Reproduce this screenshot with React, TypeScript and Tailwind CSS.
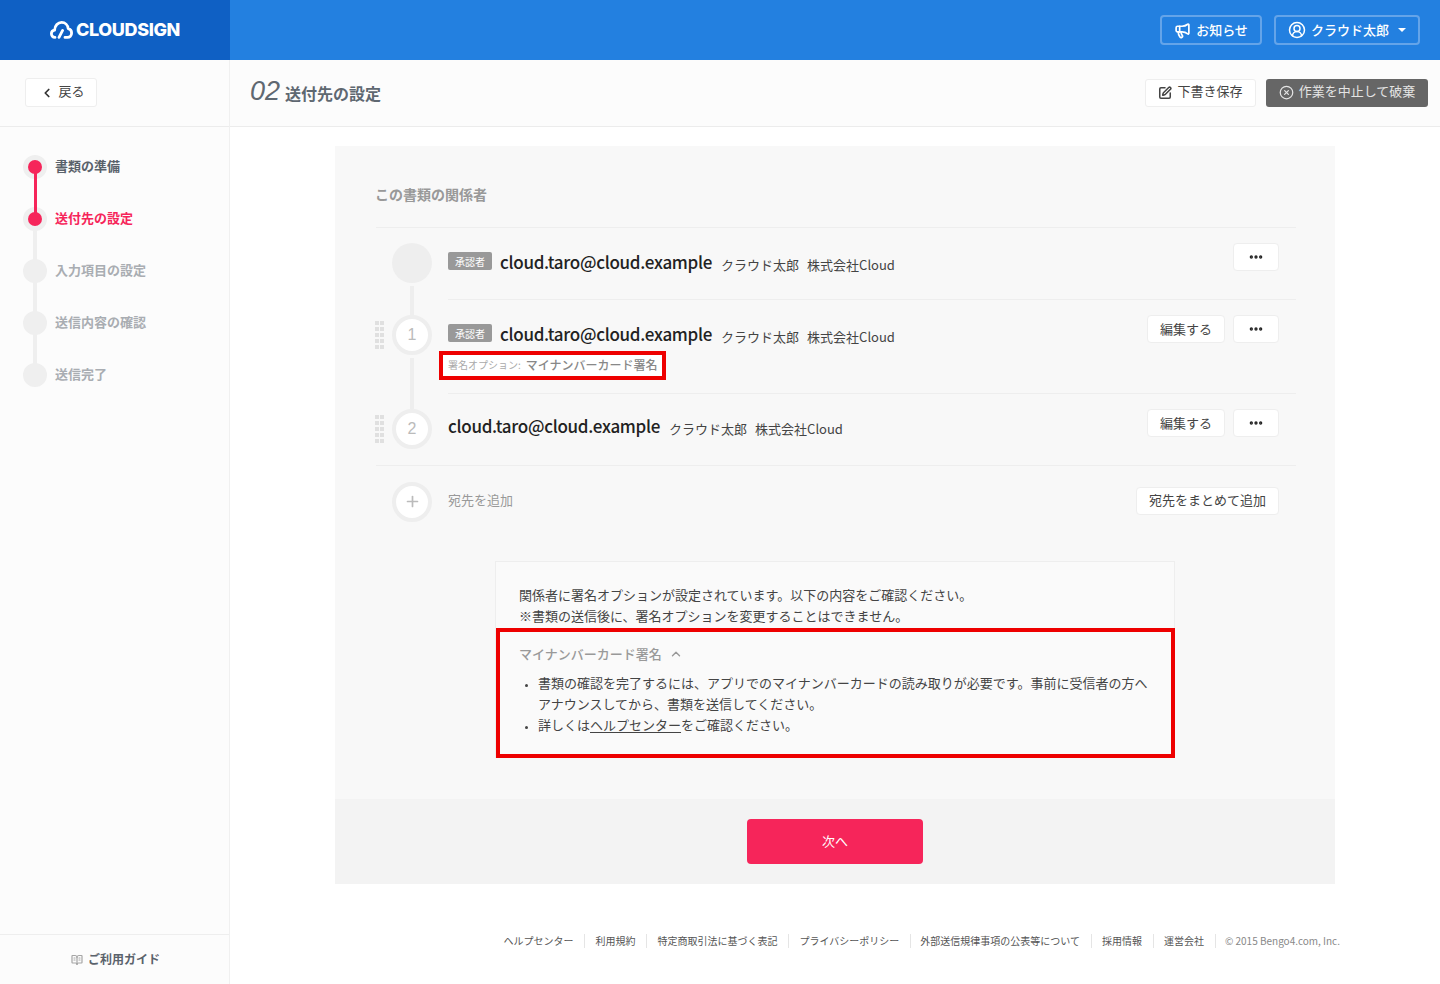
import { BookOpenText, ChevronLeft, ChevronUp, CircleUserRound, CircleX, Ellipsis, Megaphone, Plus, SquarePen } from "lucide-react";

const steps = [
  { label: "書類の準備", state: "done" },
  { label: "送付先の設定", state: "current" },
  { label: "入力項目の設定", state: "todo" },
  { label: "送信内容の確認", state: "todo" },
  { label: "送信完了", state: "todo" },
];

const footerLinks = [
  "ヘルプセンター",
  "利用規約",
  "特定商取引法に基づく表記",
  "プライバシーポリシー",
  "外部送信規律事項の公表等について",
  "採用情報",
  "運営会社",
];

function Logo() {
  return (
    <div className="flex items-center gap-[3px] text-white">
      <svg width="23" height="18" viewBox="0 0 23 18" fill="none" stroke="currentColor" strokeWidth="2.8" strokeLinecap="round" strokeLinejoin="round">
        <path d="M5 16.4 C2.6 16.4 1.4 14.6 1.4 12.8 C1.4 10.8 2.8 9.4 4.6 9.2 C4.8 4.4 8 1.4 11.6 1.4 C15.2 1.4 17.8 4 18.2 7.6 C20.2 8 21.6 9.8 21.6 12 C21.6 14.6 19.8 16.4 17.4 16.4 H15" />
        <path d="M9 16.4 L12.6 9.4" />
      </svg>
      <span className="text-[18px] leading-none font-extrabold tracking-[-0.4px] font-['Inter',sans-serif]">CLOUDSIGN</span>
    </div>
  );
}

function Sidebar() {
  return (
    <aside className="w-[230px] shrink-0 flex flex-col bg-[#fcfcfc] border-r border-[#f0f0f0]">
      <div className="h-[67px] flex items-center pl-[25px] border-b border-[#ececec] pb-[1px]">
        <button className="w-[72px] h-[29px] flex items-center justify-center gap-[4px] pl-[3px] bg-white border border-[#eeeeee] rounded-[3px] text-[13px] text-[#444]">
          <ChevronLeft size={14} strokeWidth={3} className="text-[#333]" />
          <span className="-mt-[3px]">戻る</span>
        </button>
      </div>
      <ol className="pt-[14px] flex-1">
        {steps.map((step, i) => (
          <li key={step.label} className="relative h-[52px] flex items-center pl-[55px]">
            {i < steps.length - 1 && (
              <span className={i === 0 ? "absolute left-[33.5px] top-[26px] w-[3px] h-[52px] bg-[#f6255a] z-10" : "absolute left-[33px] top-[26px] w-[4px] h-[52px] bg-[#efefef]"} />
            )}
            <span className="absolute left-[23px] top-[14px] w-[24px] h-[24px] rounded-full bg-[#efefef] flex items-center justify-center z-[5]">
              {step.state !== "todo" && <span className="w-[14px] h-[14px] rounded-full bg-[#f6255a] z-20" />}
            </span>
            <span
              className={
                "-mt-[2px] text-[13px] font-bold " +
                (step.state === "done" ? "text-[#5a626b]" : step.state === "current" ? "text-[#f6255a]" : "text-[#a9adb2]")
              }
            >
              {step.label}
            </span>
          </li>
        ))}
      </ol>
      <div className="h-[50px] border-t border-[#eeeeee] flex items-center justify-center gap-[5px] pl-[2px] text-[12px] font-bold text-[#5a626b]">
        <BookOpenText size={12} strokeWidth={2.4} className="text-[#a5a5a5]" />
        <span className="-mt-[2px]">ご利用ガイド</span>
      </div>
    </aside>
  );
}

function Approver() {
  return <span className="w-[44px] h-[18px] -mt-[2px] mr-[8px] rounded-[2px] bg-[#999] text-white text-[10px] flex items-center justify-center">承認者</span>;
}

function DotsButton() {
  return (
    <button className="w-[46px] h-[28px] flex items-center justify-center bg-white border border-[#eeeeee] rounded-[4px] text-[#222]">
      <Ellipsis size={16} strokeWidth={3} />
    </button>
  );
}

function EditButton() {
  return <button className="w-[78px] h-[28px] bg-white border border-[#eeeeee] rounded-[4px] text-[13px] text-[#444]">編集する</button>;
}

function DragHandle() {
  return (
    <div className="absolute left-[-1px] top-[22px] grid grid-cols-2 gap-x-[1px] gap-y-[2px] w-[9px]">
      {Array.from({ length: 10 }).map((_, i) => (
        <span key={i} className="w-[4px] h-[4px] bg-[#e0e0e0]" />
      ))}
    </div>
  );
}

function Person() {
  return (
    <>
      <span className="text-[17px] leading-[26px] font-medium tracking-[-0.3px] text-[#222]">cloud.taro@cloud.example</span>
      <span className="ml-[9px] mt-[6px] text-[13px] text-[#444]">クラウド太郎</span>
      <span className="ml-[8px] mt-[6px] text-[13px] text-[#444]">株式会社Cloud</span>
    </>
  );
}

function NumberCircle({ children }: { children: React.ReactNode }) {
  return (
    <div className="w-[40px] h-[40px] shrink-0 rounded-full bg-white border-[4px] border-[#eeeeee] flex items-center justify-center text-[16px] text-[#bbb] font-['Liberation_Sans',sans-serif]">
      {children}
    </div>
  );
}

export default function App() {
  return (
    <div className="min-h-[984px] flex flex-col font-['Noto_Sans_CJK_JP','Noto_Sans',sans-serif] bg-white">
      <header className="h-[60px] shrink-0 flex bg-[#2380e0]">
        <div className="w-[230px] bg-[#0f60c4] flex items-center justify-center">
          <Logo />
        </div>
        <div className="flex-1 flex items-center justify-end gap-[12px] pr-[20px]">
          <button className="w-[102px] h-[30px] flex items-center justify-center gap-[5px] rounded-[4px] border-2 border-[#64a4e9] text-white text-[13px] font-medium">
            <Megaphone size={17} strokeWidth={2.4} />
            <span className="-mt-[1px]">お知らせ</span>
          </button>
          <button className="w-[146px] h-[30px] flex items-center pl-[12px] gap-[5px] rounded-[4px] border-2 border-[#64a4e9] text-white text-[13px] font-medium">
            <CircleUserRound size={18} strokeWidth={2} />
            <span className="-mt-[1px]">クラウド太郎</span>
            <span className="ml-[4px] w-0 h-0 border-x-[4px] border-x-transparent border-t-[4px] border-t-white" />
          </button>
        </div>
      </header>

      <div className="flex-1 flex">
        <Sidebar />
        <div className="flex-1 flex flex-col min-w-0">
          <div className="h-[67px] shrink-0 flex items-center justify-between pl-[20px] pr-[12px] bg-[#fcfcfc] border-b border-[#ececec]">
            <h1 className="flex items-baseline gap-[5px] pb-[4px] text-[#5f6871]">
              <span className="text-[27px] leading-none italic font-light font-['Liberation_Sans',sans-serif]">02</span>
              <span className="text-[16px] font-bold">送付先の設定</span>
            </h1>
            <div className="flex items-center gap-[10px] pb-[1px]">
              <button className="w-[111px] h-[28px] flex items-center justify-center gap-[5px] bg-white border border-[#eeeeee] rounded-[3px] text-[13px] text-[#444]">
                <SquarePen size={14} strokeWidth={2.6} />
                <span className="-mt-[3px]">下書き保存</span>
              </button>
              <button className="w-[162px] h-[28px] flex items-center justify-center gap-[5px] bg-[#666] rounded-[3px] text-[13px] text-[#e4e4e4]">
                <CircleX size={15} strokeWidth={2} />
                <span className="-mt-[3px]">作業を中止して破棄</span>
              </button>
            </div>
          </div>

          <main className="pt-[19px]">
            <section className="w-[1000px] mx-auto bg-[#f8f8f8]">
              <div className="pt-[39px] pl-[41px] pr-[39px] pb-[41px]">
                <h2 className="h-[20px] leading-[20px] mb-[22px] -ml-[1px] -mt-[1px] text-[14px] font-bold text-[#999]">この書類の関係者</h2>
                <div className="h-[1px]" />

                <div className="relative h-[72px] border-t border-[#eeeeee] flex">
                  <div className="w-[72px] shrink-0 flex flex-col items-center pt-[15px]">
                    <div className="w-[40px] h-[40px] shrink-0 rounded-full bg-[#eeeeee]" />
                    <span className="w-[4px] h-[30px] shrink-0 mt-[3px] bg-[#eeeeee]" />
                  </div>
                  <div className="flex-1 flex items-center h-[68px]">
                    <Approver />
                    <Person />
                  </div>
                  <div className="pt-[15px] pr-[17px]">
                    <DotsButton />
                  </div>
                </div>

                <div className="relative h-[94px] flex">
                  <DragHandle />
                  <div className="w-[72px] shrink-0 flex flex-col items-center pt-[16px]">
                    <NumberCircle>1</NumberCircle>
                    <span className="w-[4px] h-[51px] shrink-0 mt-[3px] bg-[#eeeeee]" />
                  </div>
                  <div className="flex-1 border-t border-[#eeeeee]">
                    <div className="flex items-start">
                      <div className="flex-1 flex items-center h-[68px]">
                        <Approver />
                        <Person />
                      </div>
                      <div className="flex gap-[8px] pt-[15px] pr-[17px]">
                        <EditButton />
                        <DotsButton />
                      </div>
                    </div>
                    <div className="-ml-[9px] -mt-[17px] w-[227px] h-[29px] border-[4px] border-[#ee0000] bg-white flex items-center pl-[5px] pb-[2px] gap-[5px]">
                      <span className="text-[10px] text-[#aaa]">署名オプション:</span>
                      <span className="text-[12px] font-medium text-[#888]">マイナンバーカード署名</span>
                    </div>
                  </div>
                </div>

                <div className="relative h-[72px] flex">
                  <DragHandle />
                  <div className="w-[72px] shrink-0 flex flex-col items-center pt-[16px]">
                    <NumberCircle>2</NumberCircle>
                  </div>
                  <div className="flex-1 border-t border-[#eeeeee] flex items-start">
                    <div className="flex-1 flex items-center h-[64px]">
                      <Person />
                    </div>
                    <div className="flex gap-[8px] pt-[15px] pr-[17px]">
                      <EditButton />
                      <DotsButton />
                    </div>
                  </div>
                </div>

                <div className="h-[72px] border-t border-[#eeeeee] flex items-center">
                  <div className="w-[72px] shrink-0 flex justify-center">
                    <div className="w-[40px] h-[40px] rounded-full bg-white border-[4px] border-[#eeeeee] flex items-center justify-center text-[#bbb]">
                      <Plus size={17} strokeWidth={2.4} />
                    </div>
                  </div>
                  <span className="-mt-[3px] text-[13px] text-[#999]">宛先を追加</span>
                  <button className="ml-auto -mt-[2px] mr-[17px] w-[143px] h-[28px] pb-[1px] bg-white border border-[#eeeeee] rounded-[4px] text-[13px] text-[#444]">宛先をまとめて追加</button>
                </div>

                <div className="w-[680px] mx-auto mt-[24px] -translate-x-[1px] border border-[#eeeeee] border-b-0 bg-[#fafafa] text-[13px] leading-[21px] text-[#444]">
                  <div className="px-[23px] pt-[22px] pb-[2px]">
                    <p>関係者に署名オプションが設定されています。以下の内容をご確認ください。</p>
                    <p>※書類の送信後に、署名オプションを変更することはできません。</p>
                  </div>
                  <div className="h-[130px] -mr-[1px] border-[4px] border-[#ee0000] pl-[19px] pr-[21px] pt-[11px]">
                    <div className="flex items-center gap-[8px] font-medium text-[#999]">
                      マイナンバーカード署名
                      <ChevronUp size={14} strokeWidth={2.4} className="-ml-[1px]" />
                    </div>
                    <ul className="mt-[8px] pl-[19px] list-disc marker:text-[9px] marker:text-[#444]">
                      <li>書類の確認を完了するには、アプリでのマイナンバーカードの読み取りが必要です。事前に受信者の方へアナウンスしてから、書類を送信してください。</li>
                      <li>
                        詳しくは<a className="underline underline-offset-2">ヘルプセンター</a>をご確認ください。
                      </li>
                    </ul>
                  </div>
                </div>
              </div>

              <div className="h-[85px] bg-[#f3f3f3] pt-[20px] flex justify-center">
                <button className="w-[176px] h-[45px] pb-[2px] bg-[#f6255a] rounded-[4px] text-white text-[13px]">次へ</button>
              </div>
            </section>

            <footer className="mt-[50px] pr-[100px] flex justify-end items-center text-[10px] leading-[14px] text-[#555]">
              {footerLinks.map((link, i) => (
                <a key={link} className={"pr-[11px] border-r border-[#e5e5e5] " + (i === 3 || i === 6 ? "mr-[9px]" : "mr-[10px]")}>
                  {link}
                </a>
              ))}
              <span className="text-[#888]">© 2015 Bengo4.com, Inc.</span>
            </footer>
          </main>
        </div>
      </div>
    </div>
  );
}
